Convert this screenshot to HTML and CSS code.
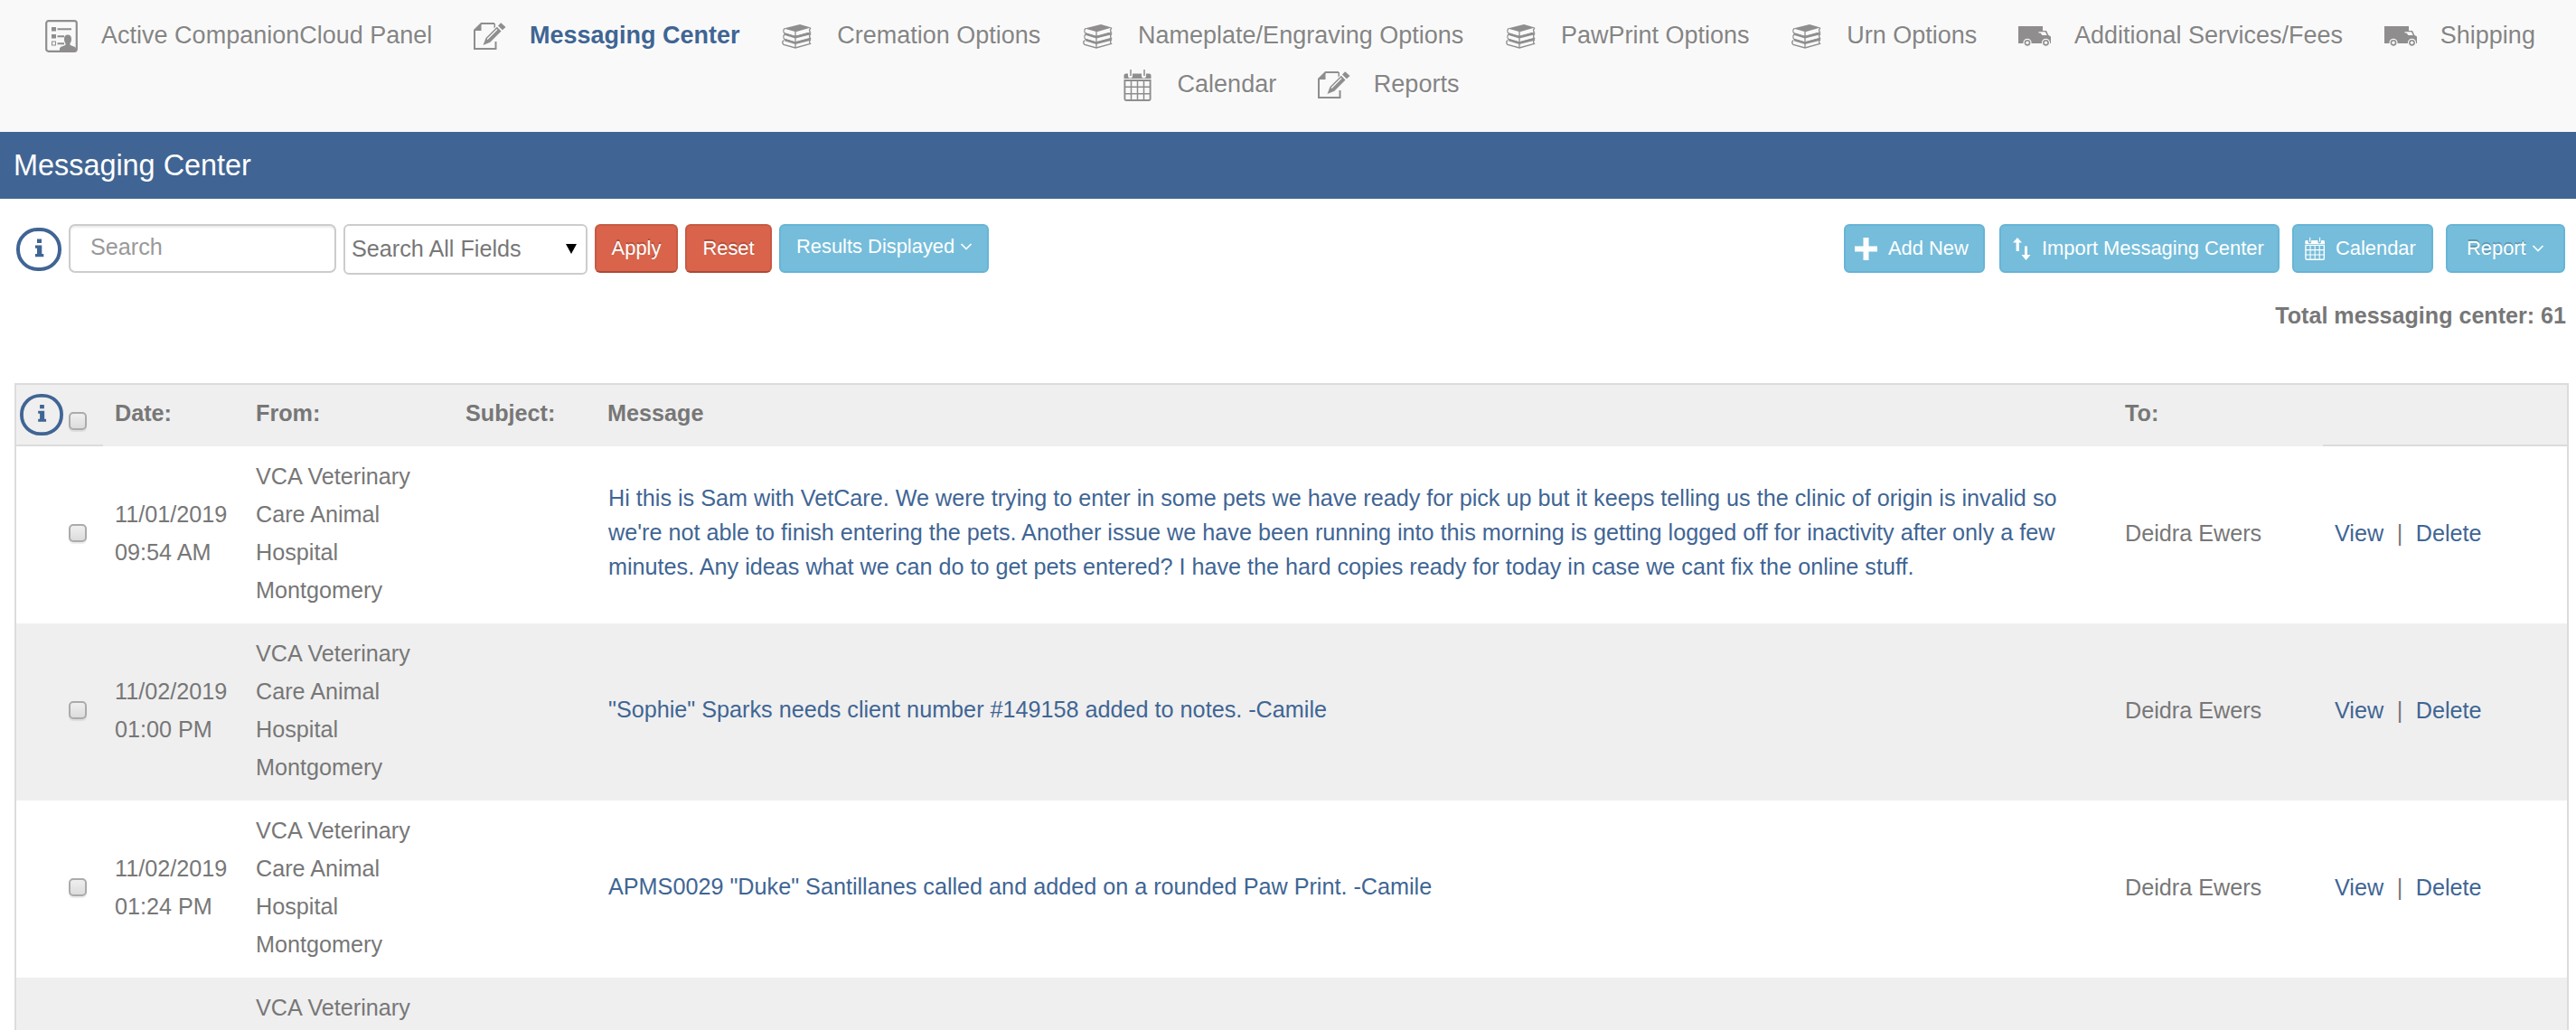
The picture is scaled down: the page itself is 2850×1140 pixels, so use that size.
FILE: index.html
```html
<!DOCTYPE html>
<html lang="en">
<head>
<meta charset="utf-8">
<title>Messaging Center</title>
<link rel="stylesheet" href="styles.css">
</head>
<body>
<svg class="sprite" aria-hidden="true">
  <symbol id="i-panel" viewBox="0 0 36 36">
    <rect x="1.2" y="1.2" width="33.6" height="33.6" rx="2.5" fill="none" stroke="currentColor" stroke-width="2.2"/>
    <path fill="currentColor" d="M7 8h5v4.500H7zM13.500 9.300H29v2H13.500zM7 16h5v4.500H7zM13.500 17.300H21v2h-7.500zM13.500 25.300H21v2h-7.500z"/>
    <rect x="7.500" y="24" width="4" height="4" fill="none" stroke="currentColor"/>
    <path fill="currentColor" d="M25 16.500c2.800 0 4 2 4 4.800 0 2-.6 3.700-1.500 4.700v1.500c1 1.500 6 1.500 6.500 4V35H16v-3.500c1-2.500 5.500-2.500 6.500-4V26c-1-1-1.500-2.700-1.500-4.700 0-2.800 1.200-4.800 4-4.800z"/>
  </symbol>
  <symbol id="i-edit" viewBox="0 0 36 36">
    <path fill="none" stroke="currentColor" stroke-width="2" d="M23 4H8.500L1 11.500V32h23.500v-8"/>
    <path fill="currentColor" d="M8.500 4v8H1zM24 4v4l-1.500 1.500V4zM10.500 28l3-8L25.800 7.700l4.700 4.700L18.300 24.700z"/>
    <path stroke="#f9f9f9" stroke-width="1.200" d="M15 21.500 26 10.500"/>
    <path fill="currentColor" d="m27 6.500 3.200-3.200L35.500 8l-3.600 3.300z"/>
  </symbol>
  <symbol id="i-books" viewBox="0 0 36 36">
    <path fill="currentColor" d="M3 9.500 21 5l12 3.500-16.500 4.800z"/>
    <g fill="none" stroke="currentColor" stroke-width="1.300">
      <path d="M4 9.500c-1.500 1.500-1.500 4 0 5.500l12 3.500L32.500 14c-1.200-1.500-1.200-3.500.5-5.300M16 13v5.500"/>
      <path d="M4 16c-1.500 1.500-1.500 4 0 5.500L16 25l16.500-4.500c-1.200-1.500-1.200-3.500.5-5.300M16 20v5"/>
      <path d="M3 22.500c-1.500 1.500-1.500 3.500 0 5L16 31l16.500-4.500c-1.200-1.500-1.200-3.500.5-5M16 26v5"/>
    </g>
    <path fill="none" stroke="currentColor" stroke-width="2.500" d="m4 15.500 12 3.800L32.500 15M4 22l12 3.800 16.500-4.300"/>
  </symbol>
  <symbol id="i-truck" viewBox="0 0 36 36">
    <path fill="currentColor" d="M0 7h27v5h4l2.500 5 2.500 1.500V26H0z"/>
    <path fill="#f9f9f9" d="M22.500 13.300h7.300l2 3.700h-5.300l-2-2.400h-2z"/>
    <g fill="currentColor" stroke="#f9f9f9" stroke-width="1.200"><circle cx="10" cy="25.300" r="4"/><circle cx="30.500" cy="25.300" r="4"/></g>
    <circle cx="10" cy="25.300" r="1.700" fill="#f9f9f9"/><circle cx="30.500" cy="25.300" r="1.700" fill="#f9f9f9"/>
  </symbol>
  <symbol id="i-cal" viewBox="0 0 36 36">
    <path fill="currentColor" d="M4.500 5.500H7V8a2.500 2.500 0 0 0 5 0V5.500h10V8a2.500 2.500 0 0 0 5 0V5.500h3.500a2 2 0 0 1 2 2V11h-30V7.500a2 2 0 0 1 2-2z"/>
    <path fill="none" stroke="currentColor" stroke-width="1.500" d="M10 1v7M25 1v7"/>
    <path fill="none" stroke="currentColor" stroke-width="1.900" d="M3.400 13h28.200v20.500a1.500 1.500 0 0 1-1.500 1.500H4.900a1.500 1.500 0 0 1-1.500-1.500z"/>
    <path stroke="currentColor" stroke-width="1.500" d="M10.500 13v22M17.500 13v22M24.500 13v22M3 20.300h29M3 27.700h29"/>
  </symbol>
  <symbol id="i-info" viewBox="0 0 50 48">
    <rect x="2" y="2" width="46" height="44" rx="21.500" ry="21.500" fill="none" stroke="currentColor" stroke-width="4"/>
    <path fill="currentColor" d="M23 12.500h5v4.500h-5zM21 19.500h7.300v9.500h2v3.200H21V29h2v-6.300h-2z"/>
  </symbol>
  <symbol id="i-chev" viewBox="0 0 14 10"><path fill="none" stroke="currentColor" stroke-width="1.700" d="m1.500 2 5.500 5.500L12.500 2"/></symbol>
</svg>

<nav class="nav">
  <a class="nav-item"><svg><use href="#i-panel"/></svg><span>Active CompanionCloud Panel</span></a>
  <a class="nav-item active"><svg><use href="#i-edit"/></svg><span>Messaging Center</span></a>
  <a class="nav-item"><svg><use href="#i-books"/></svg><span>Cremation Options</span></a>
  <a class="nav-item"><svg><use href="#i-books"/></svg><span>Nameplate/Engraving Options</span></a>
  <a class="nav-item"><svg><use href="#i-books"/></svg><span>PawPrint Options</span></a>
  <a class="nav-item"><svg><use href="#i-books"/></svg><span>Urn Options</span></a>
  <a class="nav-item"><svg><use href="#i-truck"/></svg><span>Additional Services/Fees</span></a>
  <a class="nav-item"><svg><use href="#i-truck"/></svg><span>Shipping</span></a>
  <a class="nav-item"><svg><use href="#i-cal"/></svg><span>Calendar</span></a>
  <a class="nav-item"><svg><use href="#i-edit"/></svg><span>Reports</span></a>
</nav>

<h1 class="title">Messaging Center</h1>

<div class="toolbar">
  <svg class="info"><use href="#i-info"/></svg>
  <input class="search" type="text" placeholder="Search">
  <div class="select"><span>Search All Fields</span><i class="arrow"></i></div>
  <button class="btn red apply">Apply</button>
  <button class="btn red reset">Reset</button>
  <button class="btn blue results">Results Displayed<svg class="chev"><use href="#i-chev"/></svg></button>
  <div class="actions">
    <button class="btn blue add"><svg class="ico" viewBox="0 0 25 25"><path fill="currentColor" d="M9.500 0h6v9.500H25v6h-9.500V25h-6v-9.500H0v-6h9.500z"/></svg>Add New</button>
    <button class="btn blue import"><svg class="ico" viewBox="0 0 20 25"><path fill="currentColor" d="M5 0l5 5.500H6.800V15H3.600V5.500H0zM13 9.500h3V19h3.500L14.500 25l-5-6H13z"/></svg>Import Messaging Center</button>
    <button class="btn blue cal"><svg class="ico"><use href="#i-cal"/></svg>Calendar</button>
    <button class="btn blue report">Report<svg class="chev"><use href="#i-chev"/></svg></button>
  </div>
</div>
<div class="total">Total messaging center: 61</div>

<table class="grid">
  <colgroup><col class="c-check"><col class="c-date"><col class="c-from"><col class="c-subject"><col class="c-message"><col class="c-to"><col class="c-links"></colgroup>
  <thead>
    <tr>
      <th class="line"><div class="pick"><svg class="info"><use href="#i-info"/></svg><input type="checkbox"></div></th>
      <th>Date:</th><th>From:</th><th>Subject:</th><th>Message</th><th>To:</th><th class="line"></th>
    </tr>
  </thead>
  <tbody>
    <tr>
      <td class="check"><input type="checkbox"></td>
      <td>11/01/2019<br>09:54 AM</td>
      <td>VCA Veterinary<br>Care Animal<br>Hospital<br>Montgomery</td>
      <td></td>
      <td class="message"><a>Hi this is Sam with VetCare. We were trying to enter in some pets we have ready for pick up but it keeps telling us the clinic of origin is invalid so<br>we're not able to finish entering the pets. Another issue we have been running into this morning is getting logged off for inactivity after only a few<br>minutes. Any ideas what we can do to get pets entered? I have the hard copies ready for today in case we cant fix the online stuff.</a></td>
      <td>Deidra Ewers</td>
      <td class="links"><a>View</a><span>|</span><a>Delete</a></td>
    </tr>
    <tr>
      <td class="check"><input type="checkbox"></td>
      <td>11/02/2019<br>01:00 PM</td>
      <td>VCA Veterinary<br>Care Animal<br>Hospital<br>Montgomery</td>
      <td></td>
      <td class="message"><a>"Sophie" Sparks needs client number #149158 added to notes. -Camile</a></td>
      <td>Deidra Ewers</td>
      <td class="links"><a>View</a><span>|</span><a>Delete</a></td>
    </tr>
    <tr>
      <td class="check"><input type="checkbox"></td>
      <td>11/02/2019<br>01:24 PM</td>
      <td>VCA Veterinary<br>Care Animal<br>Hospital<br>Montgomery</td>
      <td></td>
      <td class="message"><a>APMS0029 "Duke" Santillanes called and added on a rounded Paw Print. -Camile</a></td>
      <td>Deidra Ewers</td>
      <td class="links"><a>View</a><span>|</span><a>Delete</a></td>
    </tr>
    <tr class="last">
      <td></td><td></td><td>VCA Veterinary</td><td></td><td></td><td></td><td></td>
    </tr>
  </tbody>
</table>
</body>
</html>
```
FILE: styles.css
```css
* { box-sizing: border-box; }

body {
  margin: 0;
  height: 1140px;
  overflow: hidden;
  background: #fff;
  color: #777;
  font: 25.200px/42px "Liberation Sans", Arial, sans-serif;
}

.sprite { display: none; }

.nav {
  display: flex;
  flex-wrap: wrap;
  justify-content: center;
  align-content: flex-start;
  height: 146px;
  padding: 12px 0 0 5px;
  background: #f9f9f9;
  color: #858585;
  font-size: 27px;
  line-height: 54px;
  text-shadow: 1px 2px 0 #fff;
  column-gap: 45.700px;
}
.nav-item { display: flex; align-items: center; height: 54px; white-space: nowrap; }
.nav-item svg { width: 36px; height: 36px; margin: 2px 26px 0 0; color: #8f8d8d; }
.nav-item.active span { color: #406594; font-weight: bold; }

.title {
  margin: 0;
  height: 74px;
  padding-left: 15px;
  background: #406594;
  color: #fff;
  font-size: 32.400px;
  font-weight: normal;
  line-height: 75px;
}

.toolbar { display: flex; align-items: flex-start; padding: 28px 12px 0 18px; height: 108px; }
.info { display: block; width: 50px; height: 48px; color: #406594; }
.toolbar .info { margin: 4px 8px 0 0; }

.search {
  width: 296px;
  height: 54px;
  margin: 0 8px 0 0;
  padding: 0 22px 4px;
  border: 2px solid #ccc;
  border-radius: 7px;
  box-shadow: inset 0 2px 2px rgba(0, 0, 0, .08);
  font: 25.200px "Liberation Sans", Arial, sans-serif;
}
.search::placeholder { color: #999; }

.select {
  display: flex;
  align-items: center;
  justify-content: space-between;
  width: 270px;
  height: 56px;
  margin-right: 8px;
  padding: 0 10px 2px 7px;
  border: 2px solid #ccc;
  border-radius: 6px;
}
.arrow { border: 6px solid transparent; border-top: 11px solid #000; border-bottom: 0; }

.btn {
  display: flex;
  align-items: center;
  height: 54px;
  padding: 0;
  border: 2px solid;
  border-radius: 6px;
  color: #fff;
  font: 21.900px "Liberation Sans", Arial, sans-serif;
  white-space: nowrap;
}
.red {
  justify-content: center;
  margin-right: 8px;
  background: #d9644b;
  border-color: #c65a43 #c65a43 #ab4a34;
  text-shadow: 0 -2px 0 rgba(0, 0, 0, .22);
}
.blue { background: #75bddb; border-color: #66b5d6; }
.apply { width: 92px; }
.reset { width: 96px; }
.results { width: 232px; padding: 0 0 5px 17px; }
.chev { width: 14px; height: 10px; margin: 0 0 0 6px; }

.actions { display: flex; margin-left: auto; }
.add { width: 156px; padding-left: 10px; margin-right: 16px; }
.import { width: 310px; padding-left: 13px; margin-right: 14px; }
.cal { width: 156px; padding-left: 10px; margin-right: 14px; }
.report { width: 132px; padding-left: 21px; text-shadow: 0 -2px 0 rgba(0, 0, 0, .22); }
.ico { width: 25px; height: 25px; margin-right: 12px; }
.import .ico { width: 20px; margin-right: 12px; }
.cal .ico { width: 27px; height: 26px; margin-right: 9px; }

.total { padding-right: 11px; height: 96px; text-align: right; font-size: 25.100px; font-weight: bold; }

.grid {
  width: 2826px;
  margin-left: 16px;
  table-layout: fixed;
  border-collapse: separate;
  border-spacing: 0;
  border: 2px solid #dcdcdc;
  border-bottom: 0;
}
.c-check { width: 96px; }
.c-date { width: 156px; }
.c-from { width: 232px; }
.c-subject { width: 157px; }
.c-message { width: 1679px; }
.c-to { width: 232px; }
.c-links { width: 270px; }

th {
  height: 68px;
  padding: 0 0 6px 13px;
  background: #efefef;
  text-align: left;
}
th.line { padding: 0; border-bottom: 2px solid #dcdcdc; }
.pick { display: flex; align-items: flex-start; height: 66px; padding: 10px 0 0 4px; }
.pick .info { width: 48px; height: 46px; }
.pick input { margin: 20px 0 0 6px; }

input[type="checkbox"] {
  appearance: none;
  display: block;
  flex: none;
  width: 20px;
  height: 20px;
  border: 2px solid #ababab;
  border-radius: 5px;
  background: linear-gradient(#efefef, #dcdcdc);
  box-shadow: 0 2px 1px rgba(0, 0, 0, .08);
}

td { height: 196px; padding: 12px 0 16px 13px; vertical-align: middle; white-space: nowrap; }
tbody tr:nth-child(even) td { background: #efefef; }
.check { padding: 12px 0 16px 58px; }
.check input { margin: 0; }
.last td { height: 58px; padding-bottom: 0; vertical-align: top; }
.message { padding: 11px 0 17px 14px; line-height: 38px; }
.links { padding-bottom: 17px; }
a { color: inherit; }
td a { color: #406594; }
.links span { margin: 0 14.500px; }
```
